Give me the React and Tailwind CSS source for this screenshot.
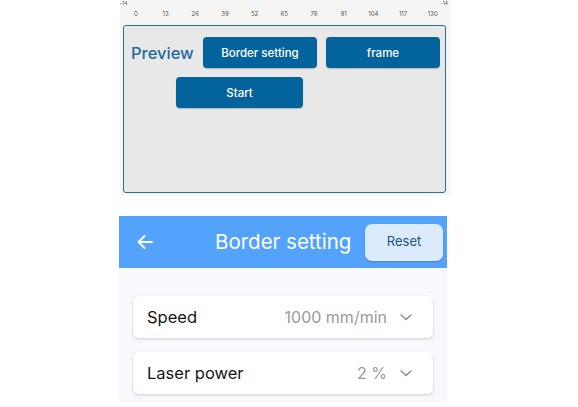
import React from "react";

const ticks = ["0", "13", "26", "39", "52", "65", "78", "91", "104", "117", "130"];

function Chevron() {
  return (
    <svg width="14" height="14" viewBox="0 0 14 14" fill="none" className="ml-[12px]">
      <path d="M2 5 L7 9.5 L12 5" stroke="#8a8a8a" strokeWidth="1.4" strokeLinecap="round" strokeLinejoin="round" />
    </svg>
  );
}

function Row({ label, value }) {
  return (
    <div className="h-[42px] bg-white rounded-[5px] shadow-[0_1px_3px_rgba(0,0,0,0.18)] flex items-center pl-[14px] pr-[20px]">
      <span className="text-[16.5px] text-[#161616]">{label}</span>
      <span className="ml-auto text-[16px] text-[#9a9a9a]">{value}</span>
      <Chevron />
    </div>
  );
}

const btn =
  "rounded-[4px] bg-[#03639c] text-white text-[11.5px] font-medium pt-[2px] shadow-[0_1px_1px_rgba(0,0,0,0.2)]";

export default function App() {
  return (
    <div className="w-[578px] h-[407px] bg-white overflow-hidden" style={{ fontFamily: "Inter, 'Noto Sans', sans-serif" }}>
      {/* top preview panel */}
      <div className="ml-[120px] w-[330px] h-[195px] bg-[#f5f5f5] flex flex-col">
        <div className="relative h-[25px]">
          <span className="absolute left-[0px] top-[0px] text-[5px] text-[#555] grayscale">-14</span>
          <span className="absolute right-[2px] top-[0px] text-[5px] text-[#555] grayscale">-14</span>
          <div className="flex pt-[10px] pl-[1px]">
            {ticks.map((t) => (
              <span key={t} className="w-[29.7px] text-center text-[6px] leading-[8px] text-[#555] [-webkit-font-smoothing:antialiased]">
                {t}
              </span>
            ))}
          </div>
        </div>
        <div className="ml-[3px] w-[323px] h-[168px] bg-[#e8e8e8] border border-[#2d6f8e] rounded-[3px] pt-[11px]">
          <div className="flex items-center">
            <span className="ml-[7px] w-[72px] text-[16.5px] leading-[20px] text-[#1d6aa1] font-medium">Preview</span>
            <button className={`w-[114px] h-[31px] ${btn}`}>Border setting</button>
            <button className={`ml-[9px] w-[114px] h-[31px] ${btn}`}>frame</button>
          </div>
          <button className={`mt-[9px] ml-[52px] w-[127px] h-[31px] ${btn}`}>Start</button>
        </div>
      </div>

      {/* bottom settings panel */}
      <div className="mt-[21px] ml-[119px] w-[328px] h-[186px] bg-[#f7f9fd] flex flex-col">
        <div className="h-[52px] bg-[#53a2fc] flex items-center relative">
          <svg width="16" height="14" viewBox="0 0 16 14" fill="none" className="ml-[18px]">
            <path d="M15 7 H1.5 M7.5 1 L1.5 7 L7.5 13" stroke="white" strokeWidth="1.8" strokeLinecap="round" strokeLinejoin="round" />
          </svg>
          <span className="ml-[62px] text-[20.5px] text-white">Border setting</span>
          <button className="ml-auto mr-[4px] w-[78px] h-[37px] rounded-[7px] bg-[#dbebfd] text-[#1a5586] text-[13px] shadow-[0_1px_2px_rgba(0,0,0,0.2)]">
            Reset
          </button>
        </div>
        <div className="pt-[28px] px-[14px] flex flex-col gap-[14px]">
          <Row label="Speed" value="1000 mm/min" />
          <Row label="Laser power" value="2 %" />
        </div>
      </div>
    </div>
  );
}
